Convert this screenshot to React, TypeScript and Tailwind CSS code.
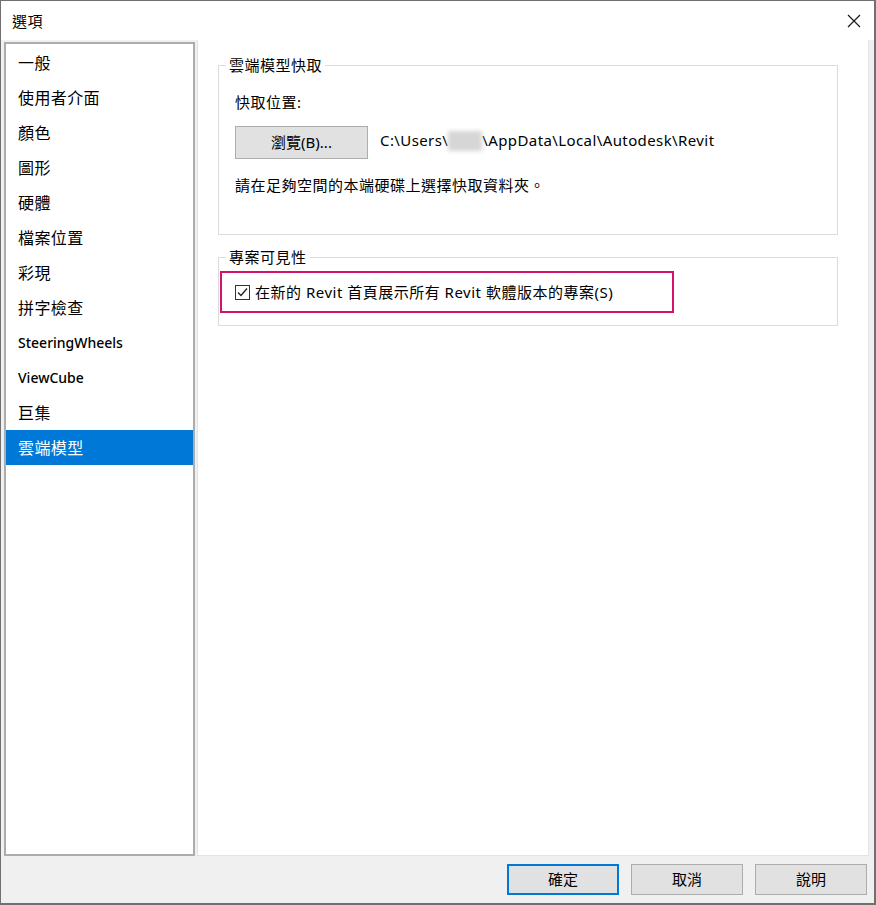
import type { FC } from "react";

const items = [
  "一般",
  "使用者介面",
  "顏色",
  "圖形",
  "硬體",
  "檔案位置",
  "彩現",
  "拼字檢查",
  "SteeringWheels",
  "ViewCube",
  "巨集",
  "雲端模型",
];

const latin = new Set(["SteeringWheels", "ViewCube"]);

const App: FC = () => {
  return (
    <div className="w-[876px] h-[905px] flex flex-col border-t border-l border-r-2 border-b-2 border-[#707070] bg-[#f0f0f0] text-black font-['Noto_Sans','Noto_Sans_CJK_TC',sans-serif] text-[15px] overflow-hidden">
      {/* Title bar */}
      <div className="h-[39px] shrink-0 bg-white flex items-center justify-between pl-[11px] pr-[13px]">
        <span className="text-[15px] leading-[20px] tracking-[0.5px]">選項</span>
        <svg width="14" height="14" viewBox="0 0 14 14" className="mt-[1px]">
          <path d="M1 1 L13 13 M13 1 L1 13" stroke="#1a1a1a" strokeWidth="1.2" fill="none" />
        </svg>
      </div>

      {/* Body */}
      <div className="flex flex-1 min-h-0">
        {/* Category list */}
        <div className="ml-[3px] mt-[2px] mb-[1px] w-[191px] border-2 border-[#acacac] bg-white pt-[1px]">
          {items.map((it) => {
            const selected = it === "雲端模型";
            return (
              <div
                key={it}
                className={
                  selected
                    ? "h-[35px] flex items-center pl-[12px] bg-[#0078d7] text-white"
                    : "h-[35px] flex items-center pl-[12px]"
                }
              >
                <span className={latin.has(it) ? "text-[14px] font-medium" : "text-[16px] tracking-[0.4px]"}>{it}</span>
              </div>
            );
          })}
        </div>

        {/* Right panel */}
        <div className="ml-[2px] mb-[1px] w-[672px] bg-white border border-t-0 border-[#e3e3e3] pt-[15px] pl-[20px] tracking-[0.5px]">
          <fieldset className="w-[620px] border border-[#dcdcdc]">
            <legend className="ml-[7px] px-[3px] leading-[20px]">雲端模型快取</legend>
            <div className="pl-[16px] pt-[17px] pb-[39px]">
              <div className="leading-[20px]">快取位置:</div>
              <div className="flex items-center mt-[14px]">
                <button className="w-[133px] h-[33px] bg-[#e1e1e1] border border-[#adadad] leading-none tracking-normal">
                  瀏覽(B)...
                </button>
                <span className="ml-[12px] pb-[4px] flex items-center whitespace-nowrap tracking-[0.4px]">
                  C:\Users\
                  <span className="inline-block w-[34px] h-[20px] bg-[#d6d6d6] blur-[2px]" />
                  \AppData\Local\Autodesk\Revit
                </span>
              </div>
              <div className="mt-[16px] leading-[20px]">請在足夠空間的本端硬碟上選擇快取資料夾。</div>
            </div>
          </fieldset>

          <fieldset className="mt-[12px] w-[620px] border border-[#dcdcdc]">
            <legend className="ml-[7px] px-[3px] leading-[20px]">專案可見性</legend>
            <div className="pl-[1px] pt-[4px] pb-[12px]">
              <div className="w-[454px] h-[42px] border-2 border-[#d4126c] flex items-center pl-[13px]">
                <span className="w-[15px] h-[15px] border border-[#333] bg-white flex items-center justify-center">
                  <svg width="11" height="11" viewBox="0 0 11 11">
                    <path d="M1 5.5 L4 8.5 L10 1.5" stroke="#222" strokeWidth="1.3" fill="none" />
                  </svg>
                </span>
                <span className="ml-[5px] whitespace-nowrap">在新的 Revit 首頁展示所有 Revit 軟體版本的專案(S)</span>
              </div>
            </div>
          </fieldset>
        </div>
      </div>

      {/* Bottom buttons */}
      <div className="h-[46px] shrink-0 flex items-start justify-end gap-[12px] pt-[7px] pr-[7px]">
        <button className="w-[112px] h-[31px] bg-[#e1e1e1] border-2 border-[#0078d7]">確定</button>
        <button className="w-[112px] h-[31px] bg-[#e1e1e1] border border-[#adadad]">取消</button>
        <button className="w-[112px] h-[31px] bg-[#e1e1e1] border border-[#adadad]">說明</button>
      </div>
    </div>
  );
};

export default App;
